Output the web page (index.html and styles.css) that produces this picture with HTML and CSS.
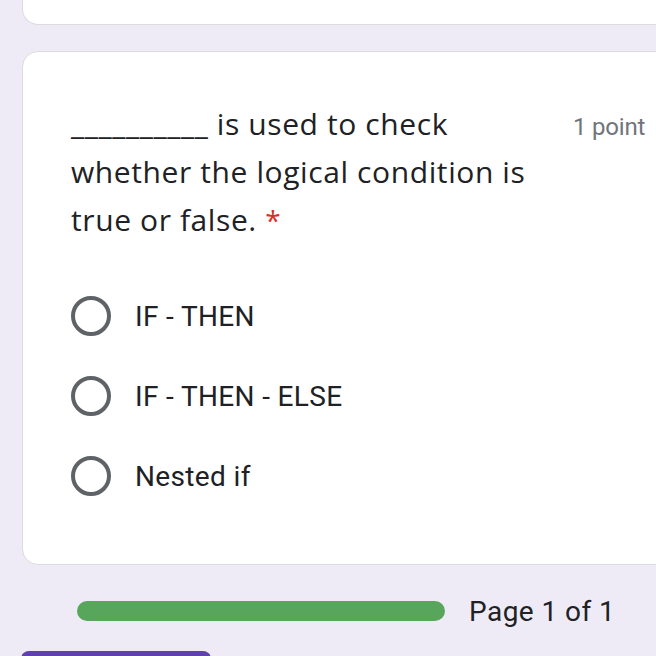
FILE: index.html
```html
<!DOCTYPE html>
<html lang="en">
<head>
<meta charset="utf-8">
<title>Form</title>
<link rel="stylesheet" href="styles.css">
</head>
<body>
<div class="page">
  <div class="card card-prev"></div>
  <div class="card card-question">
    <div class="q-head">
      <div class="q-title">__________ is used to check whether the logical condition is true or false. <span class="req">*</span></div>
      <div class="q-points">1 point</div>
    </div>
    <div class="options">
      <label class="option"><span class="radio"></span><span class="opt-text">IF - THEN</span></label>
      <label class="option"><span class="radio"></span><span class="opt-text">IF - THEN - ELSE</span></label>
      <label class="option"><span class="radio"></span><span class="opt-text">Nested if</span></label>
    </div>
  </div>
  <div class="progress-row">
    <div class="progress-bar"></div>
    <div class="progress-text">Page 1 of 1</div>
  </div>
  <div class="submit-btn"></div>
</div>
</body>
</html>
```

FILE: styles.css
```css
html, body {
  margin: 0;
  padding: 0;
  background: #efebf6;
  overflow: hidden;
  width: 656px;
  height: 656px;
}
.page {
  display: flex;
  flex-direction: column;
  padding-left: 22px;
  font-family: Roboto, "Liberation Sans", sans-serif;
  color: #202124;
}
.card {
  background: #fff;
  border: 1px solid #dadce0;
  border-radius: 16px;
  margin-right: -60px;
}
.card-prev {
  height: 24px;
  border-top: none;
  border-radius: 0 0 16px 16px;
  margin-bottom: 26px;
}
.card-question {
  padding: 48px 0 48px 48px;
}
.q-head {
  display: flex;
  align-items: flex-start;
}
.q-title {
  width: 490px;
  font-family: "Open Sans", sans-serif;
  font-size: 30px;
  letter-spacing: 0.6px;
  line-height: 48px;
  color: #202124;
}
.req {
  color: #d93025;
  font-size: 28px;
  letter-spacing: 0;
}
.q-points {
  margin-left: 12px;
  font-size: 24px;
  letter-spacing: -0.2px;
  line-height: 54px;
  color: #70757a;
}
.options {
  display: flex;
  flex-direction: column;
  margin-top: 32px;
}
.option {
  display: flex;
  align-items: center;
  height: 80px;
}
.radio {
  width: 32px;
  height: 32px;
  border: 4px solid #5f6368;
  border-radius: 50%;
  flex: none;
}
.opt-text {
  margin-left: 24px;
  font-size: 28px;
  letter-spacing: 0.35px;
  color: #202124;
}
.progress-row {
  display: flex;
  align-items: center;
  height: 40px;
  margin-top: 26px;
  padding-left: 55px;
}
.progress-bar {
  width: 368px;
  height: 20px;
  border-radius: 10px;
  background: #58a65c;
}
.progress-text {
  margin-left: 24px;
  font-size: 28px;
  letter-spacing: 0.45px;
  color: #202124;
}
.submit-btn {
  margin-top: 20px;
  margin-left: -1px;
  width: 190px;
  height: 40px;
  border-radius: 8px;
  background: #603fae;
}
```
